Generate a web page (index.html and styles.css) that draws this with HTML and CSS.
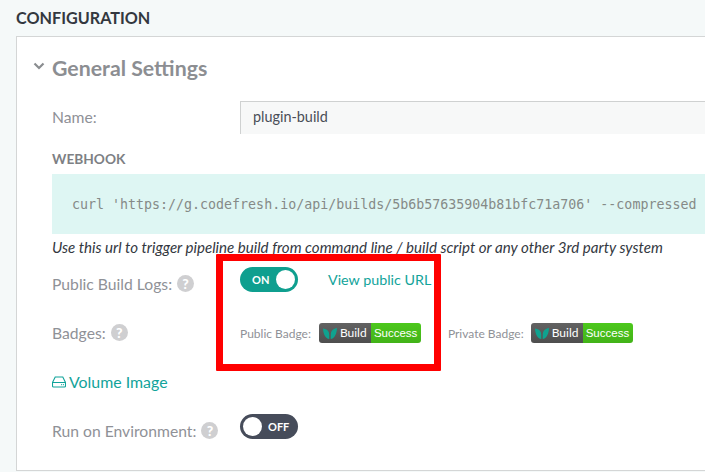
FILE: index.html
```html
<!DOCTYPE html>
<html lang="en">
<head>
<meta charset="utf-8">
<title>Configuration</title>
<link rel="stylesheet" href="styles.css">
</head>
<body>
<main class="page">
  <h2 class="page-title">CONFIGURATION</h2>
  <section class="card">
    <header class="section-head">
      <svg class="chevron" width="12" height="8" viewBox="0 0 12 8"><path d="M1.5 1.5 6 6l4.500-4.500" fill="none" stroke="#8a8d90" stroke-width="2.200"/></svg>
      <h3 class="section-title">General Settings</h3>
    </header>
    <div class="body">
      <div class="name-row">
        <span class="label name-label">Name:</span>
        <div class="input">plugin-build</div>
      </div>
      <h4 class="webhook-title">WEBHOOK</h4>
      <div class="code"><code>curl 'https://g.codefresh.io/api/builds/5b6b57635904b81bfc71a706' --compressed</code></div>
      <p class="hint">Use this url to trigger pipeline build from command line / build script or any other 3rd party system</p>

      <div class="row logs-row">
        <span class="label col-label">Public Build Logs:
          <span class="help">?</span>
        </span>
        <div class="toggle toggle-on"><span class="toggle-text">ON</span><span class="knob"></span></div>
        <a class="link view-url">View public URL</a>
      </div>

      <div class="row badges-row">
        <span class="label col-label badges-label">Badges:
          <span class="help">?</span>
        </span>
        <span class="badge-label">Public Badge:</span>
        <div class="badge">
          <span class="badge-left">
            <svg class="leaf" viewBox="0 0 14 11"><path d="M0 .5c3 .4 5.300 1.800 6 4.200.3 1.500.3 3.300.3 6.300C2.500 10.500 .3 6.500 0 .5ZM14 0c-3 .4-5.300 2-6 4.500-.3 1.500-.3 3.500-.3 6.500 3.800-.5 6-5 6.300-11Z" fill="#0fa28f"/></svg>
            Build
          </span>
          <span class="badge-right">Success</span>
        </div>
        <span class="badge-label private-label">Private Badge:</span>
        <div class="badge private-badge">
          <span class="badge-left">
            <svg class="leaf" viewBox="0 0 14 11"><path d="M0 .5c3 .4 5.300 1.800 6 4.200.3 1.500.3 3.300.3 6.300C2.500 10.500 .3 6.500 0 .5ZM14 0c-3 .4-5.300 2-6 4.500-.3 1.500-.3 3.500-.3 6.500 3.800-.5 6-5 6.300-11Z" fill="#0fa28f"/></svg>
            Build
          </span>
          <span class="badge-right">Success</span>
        </div>
      </div>

      <a class="link volume">
        <svg class="hdd" viewBox="0 0 14 12"><path d="M3.200 1h7.600l2.700 5.500V10a1 1 0 0 1-1 1h-11a1 1 0 0 1-1-1V6.500L3.200 1ZM.8 6.500h12.400" fill="none" stroke="#10a39a" stroke-width="1.100"/><path d="M9 8.700h1.200M11 8.700h1" stroke="#10a39a" stroke-width="1"/></svg>
        Volume Image
      </a>

      <div class="row env-row">
        <span class="label col-label">Run on Environment:
          <span class="help">?</span>
        </span>
        <div class="toggle toggle-off"><span class="knob"></span><span class="toggle-text">OFF</span></div>
      </div>
    </div>
  </section>
  <div class="highlight"></div>
</main>
</body>
</html>
```

FILE: styles.css
```css
html, body {
  margin: 0;
  padding: 0;
}

body {
  width: 705px;
  height: 472px;
  overflow: hidden;
  background: #f5f9f9;
  font-family: Lato, "Liberation Sans", sans-serif;
  color: #8f9197;
}

.page {
  position: relative;
  height: 472px;
  padding: 9px 0 0 16px;
  box-sizing: border-box;
  overflow: hidden;
}

.page-title {
  margin: 0;
  font-size: 16.200px;
  line-height: 17px;
  font-weight: 700;
  color: #33383f;
}

.card {
  box-sizing: border-box;
  width: 720px;
  height: 435px;
  margin-top: 10px;
  background: #fff;
  border: 1px solid #d4d6d6;
  border-right: 0;
}

.section-head {
  display: flex;
  align-items: center;
  height: 30px;
  margin-top: 16px;
  padding-left: 16px;
}

.chevron {
  margin-top: -5px;
}

.section-title {
  margin: 0 0 0 7px;
  font-size: 21.300px;
  line-height: 30px;
  font-weight: 700;
  color: #8c8e92;
}

.body {
  padding-left: 35px;
}

.name-row {
  display: flex;
  align-items: center;
  height: 33px;
  margin-top: 18px;
}

.label {
  font-size: 15.700px;
  line-height: 20px;
  color: #8f9197;
}

.name-label {
  width: 188px;
  margin-top: -1px;
}

.input {
  box-sizing: border-box;
  flex: 1;
  height: 33px;
  padding: 0 12px;
  background: #f7f8f8;
  border-left: 1px solid #cfd1d1;
  border-top: 1px solid #cfd1d1;
  font-size: 14.400px;
  line-height: 30px;
  color: #4a4e57;
}

.webhook-title {
  margin: 17px 0 0;
  font-size: 13.700px;
  line-height: 16px;
  font-weight: 700;
  color: #7d8084;
}

.code {
  display: flex;
  align-items: center;
  height: 60px;
  margin-top: 7px;
  padding-left: 20px;
  background: #def6f3;
}

.code code {
  font-family: "DejaVu Sans Mono", monospace;
  font-size: 13.300px;
  color: #858a87;
  white-space: pre;
}

.hint {
  margin: 5px 0 0;
  font-size: 15.100px;
  line-height: 17px;
  font-style: italic;
  color: #33383f;
  white-space: nowrap;
}

.row {
  display: flex;
  align-items: center;
}

.col-label {
  display: flex;
  align-items: center;
  gap: 5px;
  width: 188px;
  margin-top: 9px;
  white-space: nowrap;
}

.badges-label {
  margin-top: 0;
}

.help {
  flex: none;
  width: 17px;
  height: 17px;
  margin-top: -2px;
  border-radius: 50%;
  background: #cfcfd1;
  color: #fff;
  font-size: 14px;
  font-weight: 900;
  line-height: 17px;
  text-align: center;
}

.logs-row {
  height: 25px;
  margin-top: 11px;
}

.toggle {
  box-sizing: border-box;
  display: flex;
  align-items: center;
  width: 58px;
  height: 25px;
  border-radius: 13px;
  font-size: 11px;
  font-weight: 700;
  color: #fff;
}

.toggle-on {
  justify-content: space-between;
  padding: 0 3px 0 12px;
  background: #0f9f8f;
}

.toggle-off {
  gap: 6px;
  padding-left: 3px;
  background: #464c5a;
}

.knob {
  width: 19px;
  height: 19px;
  border-radius: 50%;
  background: #fff;
}

.link {
  color: #12a39a;
  font-size: 15.900px;
  line-height: 20px;
}

.view-url {
  margin-left: 30px;
  font-size: 14.300px;
}

.badges-row {
  height: 22px;
  margin-top: 30px;
}

.badge-label {
  font-size: 12px;
  color: #8f9197;
  white-space: nowrap;
}

.private-label {
  margin-left: 27px;
}

.badge {
  display: flex;
  height: 20px;
  margin-left: 8px;
  border-radius: 3px;
  overflow: hidden;
  font-size: 11.500px;
  line-height: 20px;
  color: #fff;
  font-family: "Liberation Sans", sans-serif;
}

.private-badge {
  margin-left: 7px;
}

.badge-left {
  display: flex;
  align-items: center;
  gap: 3px;
  width: 48px;
  padding-left: 4px;
  background: linear-gradient(#626262, #4e4e4e);
  font-family: Lato, sans-serif;
  font-size: 12px;
}

.leaf {
  width: 14px;
  height: 11px;
  flex: none;
}

.badge-right {
  width: 50px;
  padding-left: 3px;
  box-sizing: border-box;
  background: linear-gradient(#4cc81c, #42b318);
}

.volume {
  display: flex;
  align-items: center;
  gap: 3px;
  margin-top: 28px;
  width: max-content;
}

.hdd {
  width: 14px;
  height: 12px;
}

.env-row {
  height: 25px;
  margin-top: 22px;
}

.highlight {
  position: absolute;
  left: 216px;
  top: 254px;
  width: 225px;
  height: 117px;
  box-sizing: border-box;
  border: 7px solid #ff0000;
  border-radius: 1px;
}
```
